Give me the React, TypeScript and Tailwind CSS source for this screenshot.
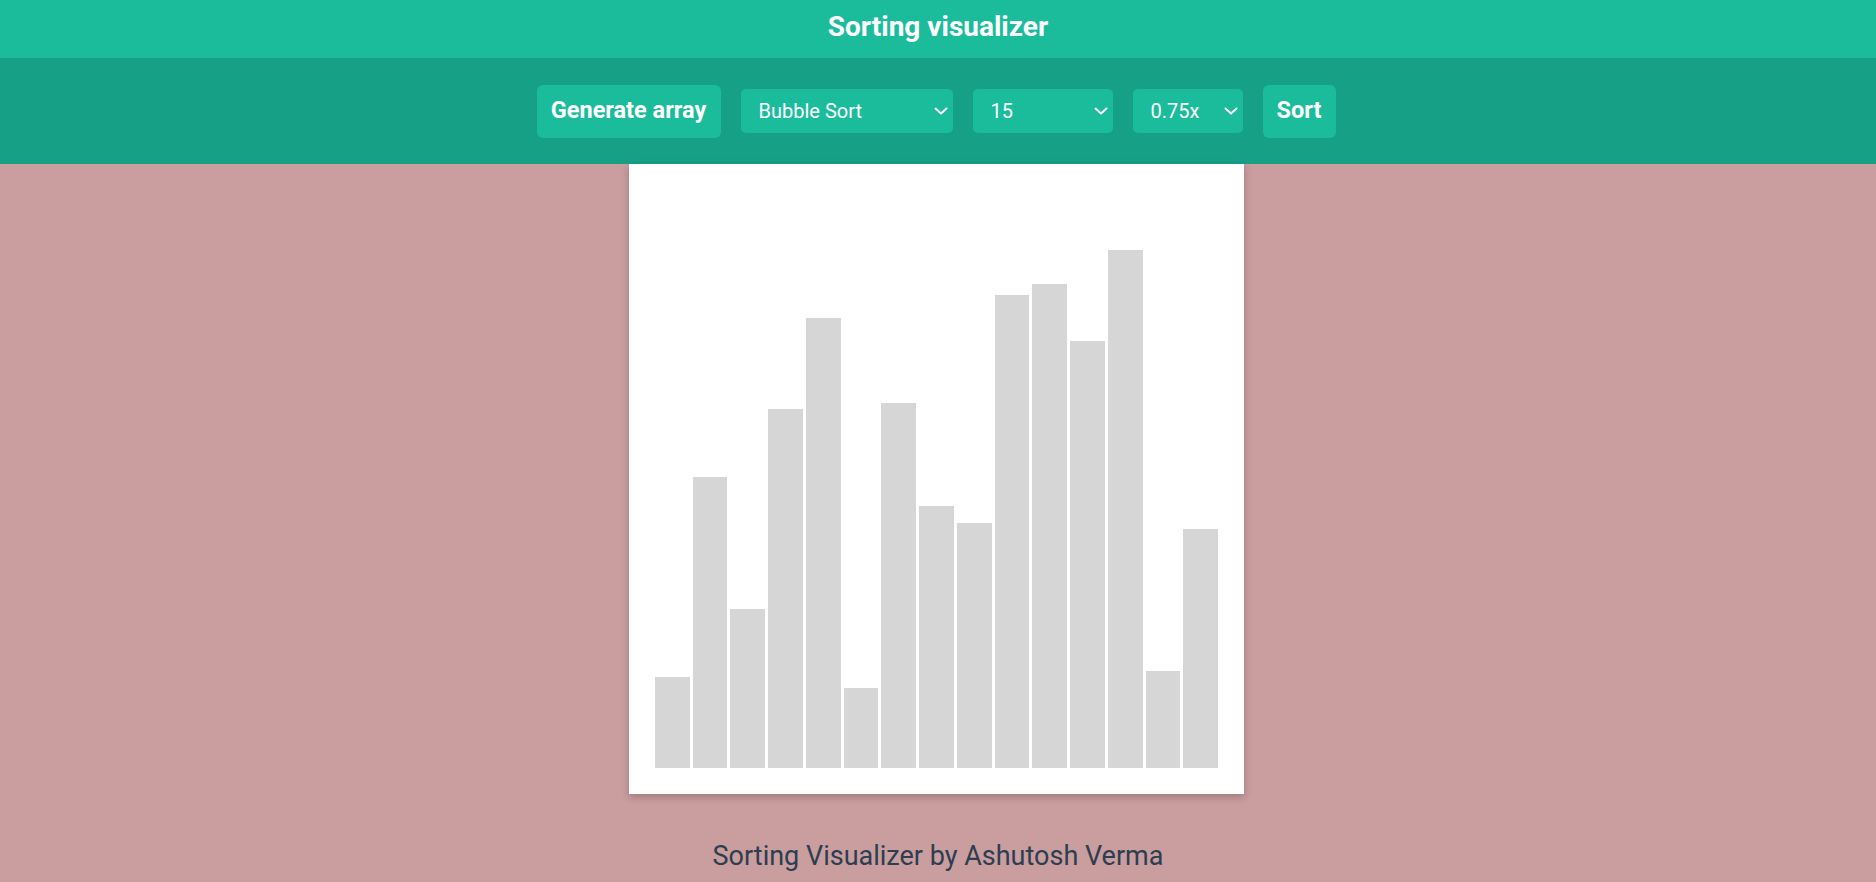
const bars = [91, 291, 159, 359, 450, 80, 365, 262, 245, 473, 484, 427, 518, 97, 239];

const Chevron = () => (
    <svg
        className="pointer-events-none absolute right-[5px] top-1/2 -translate-y-1/2"
        width="14"
        height="8"
        viewBox="0 0 14 8"
        fill="none"
    >
        <polyline points="1.5,1.5 7,6.5 12.5,1.5" stroke="white" strokeWidth="2" strokeLinecap="round" strokeLinejoin="round" />
    </svg>
);

const Dropdown = ({ width, value, options }: { width: string; value: string; options: string[] }) => {
    return (
        <div className={`relative h-[44px] ${width}`}>
            <select
                defaultValue={value}
                className="h-full w-full appearance-none rounded-[5px] bg-[#1abc9c] pl-[18px] pr-6 text-[20px] text-white outline-none"
            >
                {options.map((opt) => (
                    <option key={opt} value={opt}>
                        {opt}
                    </option>
                ))}
            </select>
            <Chevron />
        </div>
    );
};

export default function App() {
    return (
        <div className="min-h-screen bg-[#ca9d9f] font-['Roboto',_'Liberation_Sans',_sans-serif]">
            <header className="flex h-[58px] items-center justify-center bg-[#1abc9c] pb-[5px]">
                <h1 className="text-[28px] font-bold text-white">Sorting visualizer</h1>
            </header>

            <div className="flex h-[106px] items-center justify-center gap-[20px] bg-[#16a085] pr-[4px]">
                <button className="h-[53px] w-[184px] rounded-[6px] bg-[#1abc9c] text-[23.5px] font-bold text-white">
                    Generate array
                </button>
                <Dropdown
                    width="w-[212px]"
                    value="Bubble Sort"
                    options={["Bubble Sort", "Selection Sort", "Insertion Sort", "Merge Sort", "Quick Sort"]}
                />
                <Dropdown width="w-[140px]" value="15" options={["5", "10", "15", "20", "25", "30"]} />
                <Dropdown width="w-[110px]" value="0.75x" options={["0.25x", "0.50x", "0.75x", "1.00x", "2.00x"]} />
                <button className="h-[53px] w-[73px] rounded-[6px] bg-[#1abc9c] text-[23.5px] font-bold text-white">
                    Sort
                </button>
            </div>

            <div className="flex justify-center pr-[3px]">
                <div className="flex h-[630px] w-[615px] items-end gap-[3px] bg-white px-[26px] pb-[26px] shadow-[0_3px_8px_rgba(0,0,0,0.22)]">
                    {bars.map((h, i) => (
                        <div key={i} className="flex-1 bg-[#d6d6d6]" style={{ height: h }} />
                    ))}
                </div>
            </div>

            <footer className="mt-[42px] text-center text-[27px] text-[#2c3e50]">
                Sorting Visualizer by Ashutosh Verma
            </footer>
        </div>
    );
}
